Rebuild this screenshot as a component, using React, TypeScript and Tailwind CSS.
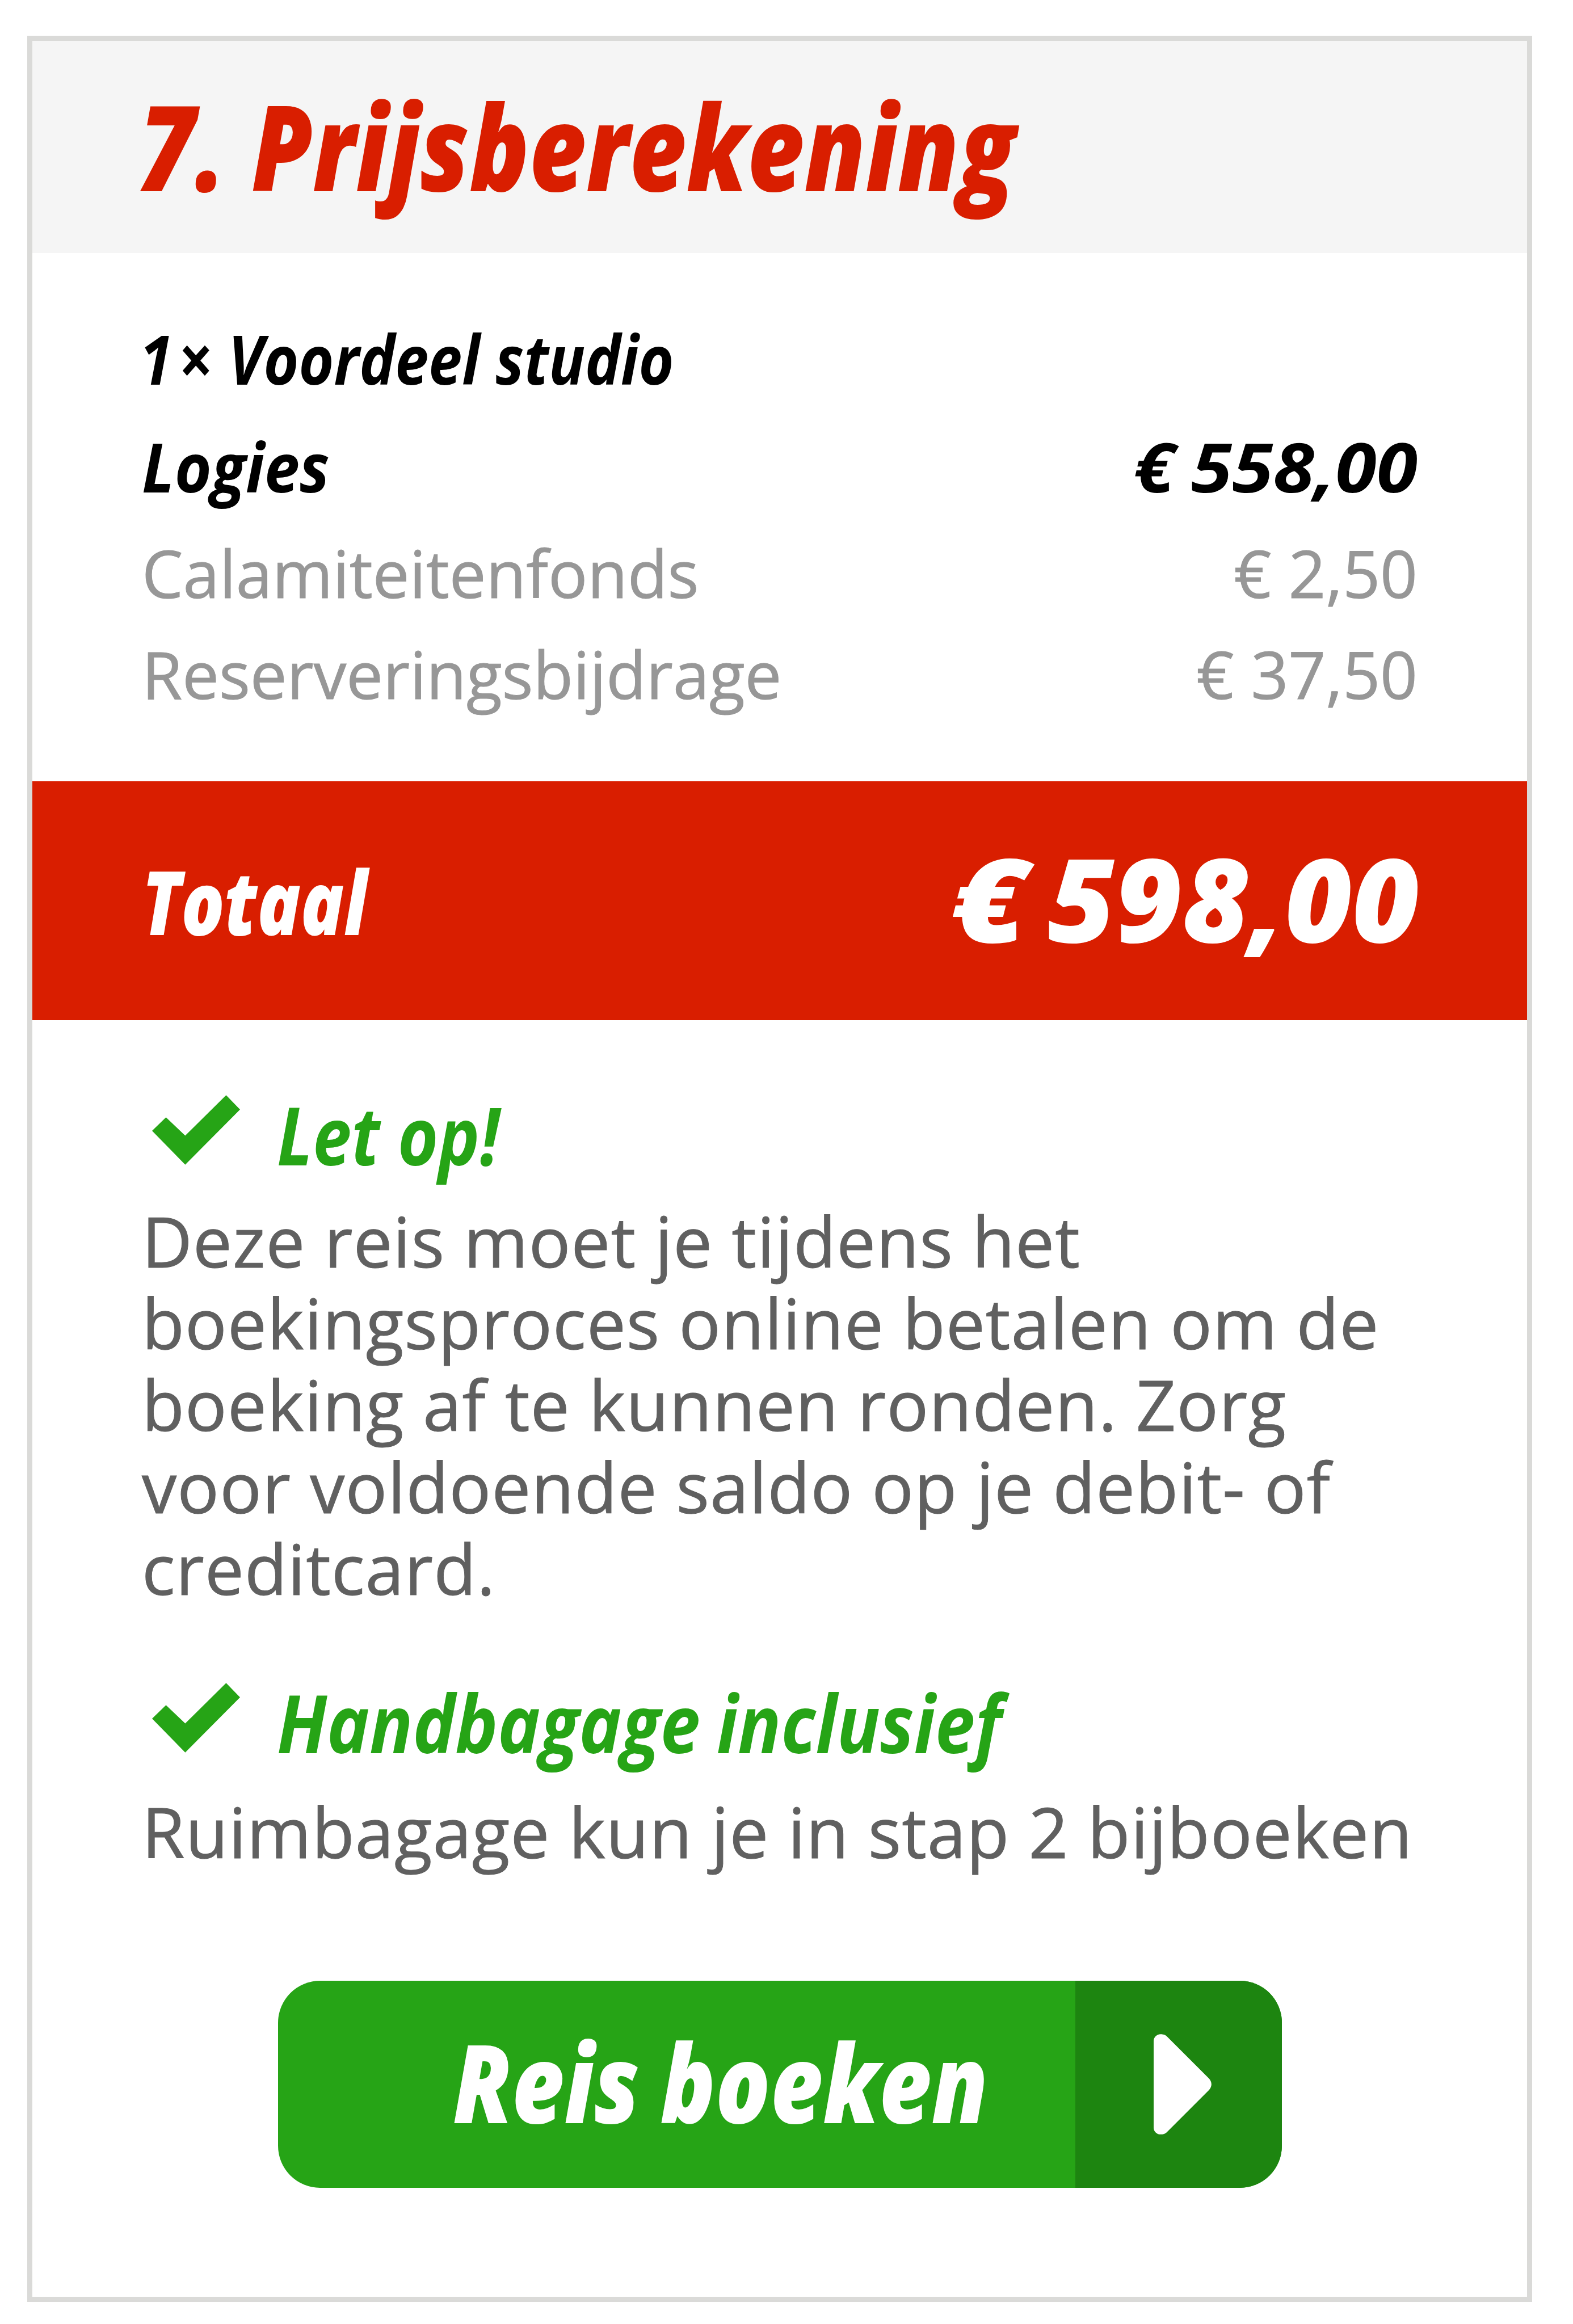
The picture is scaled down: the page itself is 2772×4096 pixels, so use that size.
import React from 'react';

interface PriceRowProps {
  label: string;
  price: string;
}

interface NoticeTitleProps {
  children: React.ReactNode;
  className: string;
}

const DISPLAY = 'italic leading-none whitespace-nowrap';

const CheckIcon: React.FC = () => (
  <svg viewBox="0 0 215 170" className="ml-[18px] mb-[12px] w-[155px] h-[123px] shrink-0" fill="#26a416">
    <path d="M0 87 L34 54 L81 99 L181 0 L215 35 L81 170 Z" />
  </svg>
);

const PriceRow: React.FC<PriceRowProps> = ({ label, price }) => (
  <div className="h-[178px] flex items-center justify-between text-[115.3px] leading-none text-[#979797] [-webkit-text-stroke:1px_#979797]">
    <span>{label}</span>
    <span>{price}</span>
  </div>
);

const NoticeTitle: React.FC<NoticeTitleProps> = ({ children, className }) => (
  <div className="h-[160px] flex items-center">
    <CheckIcon />
    <h2 className={`${DISPLAY} ml-[65px] pt-[3px] text-[142px] font-bold tracking-normal text-[#26a416] origin-left ${className}`}>{children}</h2>
  </div>
);

const App: React.FC = () => {
  return (
    <div className="w-[2772px] h-[4096px] bg-white pt-[63px] pl-[48px] font-['Open_Sans','Noto_Sans',sans-serif]">
      <div className="w-[2652px] h-[3994px] border-[9px] border-[#dadad8] flex flex-col">
        {/* Header */}
        <div className="h-[374px] bg-[#f5f5f5] flex items-center pl-[187px] pb-[6px]">
          <h1 className={`${DISPLAY} text-[209px] font-extrabold text-[#d91e00] origin-left scale-x-[0.831]`}>7. Prijsberekening</h1>
        </div>

        {/* Price lines */}
        <div className="h-[931px] pt-[84px] px-[193px]">
          <div className="h-[194px] pt-[8px] flex items-center">
            <span className={`${DISPLAY} text-[121px] font-bold origin-left scale-x-[0.876] -ml-[4px]`}>
              <span className="[word-spacing:-0.17em]">1 ×</span> Voordeel studio
            </span>
          </div>
          <div className="h-[194px] flex items-center justify-between">
            <span className={`${DISPLAY} text-[121px] font-bold origin-left scale-x-[0.92]`}>Logies</span>
            <span className={`${DISPLAY} text-[121px] font-bold origin-right scale-x-[1.085] [word-spacing:-0.04em]`}>€ 558,00</span>
          </div>
          <div className="mt-[3px]">
            <PriceRow label="Calamiteitenfonds" price="€ 2,50" />
            <PriceRow label="Reserveringsbijdrage" price="€ 37,50" />
          </div>
        </div>

        {/* Total */}
        <div className="h-[421px] bg-[#d91e00] text-white flex items-center justify-between pl-[193px] pr-[190px]">
          <span className={`${DISPLAY} text-[156px] font-extrabold origin-left scale-x-[0.807]`}>Totaal</span>
          <span className={`${DISPLAY} pb-[12px] text-[204px] font-extrabold [word-spacing:-0.09em]`}>
            <span className="inline-block origin-right scale-x-[1.18]">€</span> 598,00
          </span>
        </div>

        {/* Notices */}
        <div className="pt-[119px] px-[193px] text-[#606060] text-[122.5px] leading-[144.2px] tracking-[1.15px]">
          <NoticeTitle className="scale-x-[0.86]">Let op!</NoticeTitle>
          <p className="mt-[38px] whitespace-nowrap [-webkit-text-stroke:1px_#606060]">
            Deze reis moet je tijdens het
            <br />
            boekingsproces online betalen om de
            <br />
            boeking af te kunnen ronden. Zorg
            <br />
            voor voldoende saldo op je debit- of
            <br />
            creditcard.
          </p>
          <div className="mt-[117px]">
            <NoticeTitle className="scale-x-[0.888] [word-spacing:-0.03em]">Handbagage inclusief</NoticeTitle>
          </div>
          <p className="mt-[43px] whitespace-nowrap [-webkit-text-stroke:1px_#606060]">Ruimbagage kun je in stap 2 bijboeken</p>
        </div>

        {/* Call to action */}
        <button className="mt-[191px] ml-[433px] w-[1769px] h-[365px] rounded-[74px] overflow-hidden flex bg-[#26a416] text-white">
          <span className="flex-1 h-full flex items-center justify-end pr-[154px] pb-[12px]">
            <span className={`${DISPLAY} text-[192px] font-extrabold origin-right scale-x-[0.833] [word-spacing:-0.03em]`}>Reis boeken</span>
          </span>
          <span className="w-[364px] h-full flex items-center pl-[138px] bg-[#1d8510]">
            <svg viewBox="0 0 142 246" className="w-[102px] h-[177px]" fill="#fff">
              <path d="M0 17 C0 8 7 0 17 0 C23 0 28 1 33 6 L135 108 C144 117 144 129 135 138 L33 240 C28 245 23 246 17 246 C7 246 0 238 0 229 Z" />
            </svg>
          </span>
        </button>
      </div>
    </div>
  );
};

export default App;
